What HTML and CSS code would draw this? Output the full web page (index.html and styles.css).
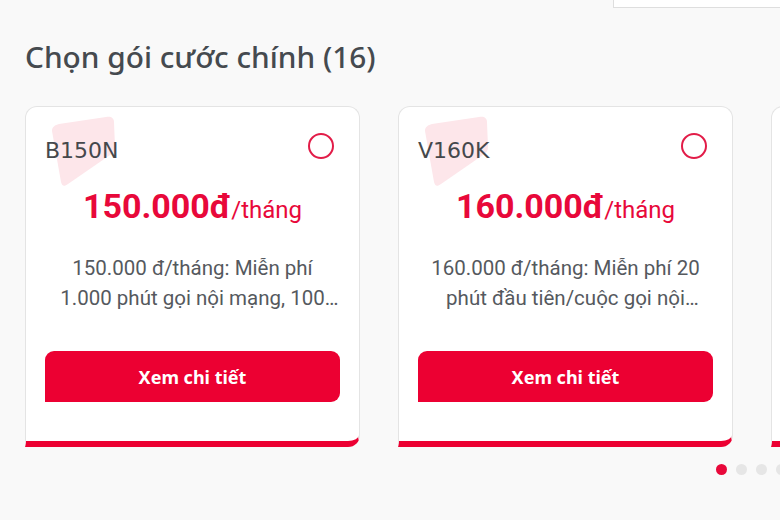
FILE: index.html
```html
<!DOCTYPE html>
<html lang="vi">
<head>
<meta charset="utf-8">
<link rel="stylesheet" href="styles.css">
</head>
<body>
<div class="topbar"><div class="search"></div></div>
<h2 class="title">Chọn gói cước chính (16)</h2>
<div class="slider">
  <div class="track">
    <div class="card">
      <svg class="deco" width="100" height="90" viewBox="0 0 100 90"><path d="M26,24 C26,20 29,18 33,17 L80,10 C85,9 88,11 88,15 L89,40 C89,44 87,46 84,48 L42,77 C38,80 36,79 35,75 Z" fill="#fde6ea"/></svg>
      <div class="head"><span class="code">B150N</span><span class="radio"></span></div>
      <div class="price"><b>150.000đ</b><span>/tháng</span></div>
      <p class="desc">150.000 đ/tháng: Miễn phí 1.000 phút gọi nội mạng, 100 phút gọi ngoại mạng, 4GB/ngày</p>
      <button class="btn">Xem chi tiết</button>
    </div>
    <div class="card">
      <svg class="deco" width="100" height="90" viewBox="0 0 100 90"><path d="M26,24 C26,20 29,18 33,17 L80,10 C85,9 88,11 88,15 L89,40 C89,44 87,46 84,48 L42,77 C38,80 36,79 35,75 Z" fill="#fde6ea"/></svg>
      <div class="head"><span class="code">V160K</span><span class="radio"></span></div>
      <div class="price"><b>160.000đ</b><span>/tháng</span></div>
      <p class="desc">160.000 đ/tháng: Miễn phí 20 phút đầu tiên/cuộc gọi nội mạng, 50 phút ngoại mạng, 4GB/ngày</p>
      <button class="btn">Xem chi tiết</button>
    </div>
    <div class="card">
      <div class="head"><span class="radio"></span></div>
    </div>
  </div>
</div>
<div class="dots">
  <span class="dot active"></span><span class="dot"></span><span class="dot"></span><span class="dot"></span>
</div>
</body>
</html>
```
FILE: styles.css
```css
html, body {
  margin: 0;
  padding: 0;
  background: #f9f9f9;
  overflow: hidden;
}
body {
  width: 780px;
  height: 520px;
  font-family: Roboto, "Noto Sans", sans-serif;
}
.topbar {
  height: 8px;
  display: flex;
}
.search {
  margin-left: 613px;
  flex: 1;
  background: #fff;
  border-left: 1px solid #dedede;
  border-bottom: 1px solid #dedede;
}
.title {
  margin: 31px 0 31px 25px;
  font-family: "Noto Sans", sans-serif;
  font-weight: 500;
  font-size: 29.8px;
  line-height: 36px;
  color: #454a4f;
}
.slider {
  overflow: hidden;
  padding-left: 25px;
}
.track {
  display: flex;
  gap: 38px;
}
.card {
  position: relative;
  flex: 0 0 335px;
  box-sizing: border-box;
  background: #fff;
  border: 1px solid #e4e4e4;
  border-bottom: 6px solid #ec0032;
  border-radius: 12px 12px 12px 0;
  padding: 26px 19px 39px;
  display: flex;
  flex-direction: column;
}
.deco {
  position: absolute;
  left: 0;
  top: 0;
}
.head {
  position: relative;
  display: flex;
  justify-content: space-between;
  align-items: flex-start;
  height: 26px;
}
.code {
  font-family: "DejaVu Sans", sans-serif;
  font-size: 22px;
  line-height: 26px;
  margin-top: 5px;
  color: #45484c;
}
.radio {
  width: 22px;
  height: 22px;
  border: 2px solid #e21c48;
  border-radius: 50%;
  margin-right: 6px;
  margin-left: auto;
}
.price {
  position: relative;
  margin-top: 27px;
  text-align: center;
  line-height: 40px;
  color: #e8083a;
}
.price b {
  font-size: 34px;
  font-weight: 700;
}
.price span {
  font-size: 24px;
}
.desc {
  margin: 20px 0 0;
  font-size: 20.5px;
  line-height: 30px;
  color: #55595e;
  text-align: center;
  display: -webkit-box;
  -webkit-line-clamp: 2;
  -webkit-box-orient: vertical;
  overflow: hidden;
}
.btn {
  margin-top: 38px;
  height: 51px;
  border: 0;
  border-radius: 9px 9px 9px 0;
  background: #ec0032;
  color: #fff;
  font-family: "Noto Sans", sans-serif;
  font-weight: 700;
  font-size: 18px;
}
.dots {
  display: flex;
  gap: 9px;
  padding: 17px 0 0 716px;
}
.dot {
  flex: 0 0 11px;
  height: 11px;
  border-radius: 50%;
  background: #e6e6e6;
}
.dot.active {
  background: #e8083a;
}
```
